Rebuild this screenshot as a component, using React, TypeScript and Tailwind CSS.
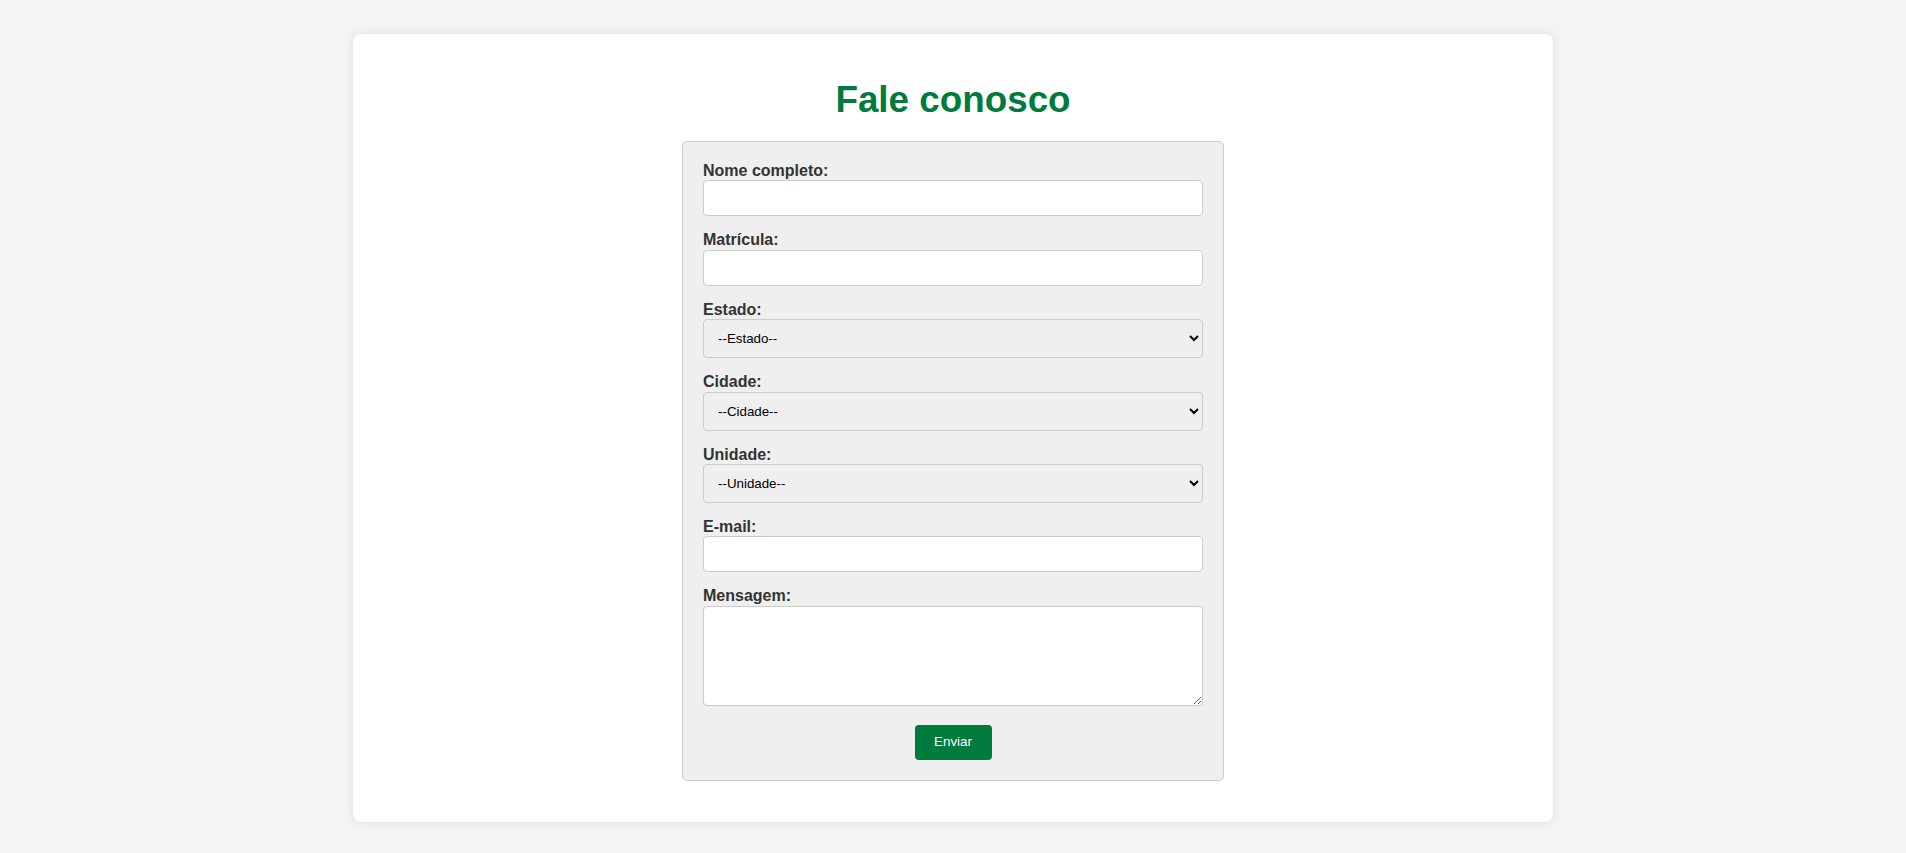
import { useState } from "react";

const fields = [
  { id: "nome", label: "Nome completo:", kind: "input", type: "text" },
  { id: "matricula", label: "Matrícula:", kind: "input", type: "text" },
  { id: "estado", label: "Estado:", kind: "select", placeholder: "--Estado--" },
  { id: "cidade", label: "Cidade:", kind: "select", placeholder: "--Cidade--" },
  { id: "unidade", label: "Unidade:", kind: "select", placeholder: "--Unidade--" },
  { id: "email", label: "E-mail:", kind: "input", type: "email" },
];

export default function App() {
  const [mensagem, setMensagem] = useState("");

  return (
    <div className="min-h-screen bg-[#f4f4f4] pt-[34px] pb-8 font-['Liberation_Sans',Arial,sans-serif]">
      <div className="mx-auto w-[1200px] rounded-lg bg-white pt-[45px] pb-[41px] shadow-[0_0_10px_rgba(0,0,0,0.1)]">
        <h1 className="text-center text-[36.8px] leading-[42px] font-bold text-[#007a3d]">
          Fale conosco
        </h1>

        <form
          className="mx-auto mt-[20px] w-[542px] rounded-[5px] border border-[#cccccc] bg-[#efefef] p-[20px]"
          onSubmit={(e) => e.preventDefault()}
        >
          {fields.map((f) => (
            <div key={f.id} className="mb-[15px]">
              <label htmlFor={f.id} className="block text-[16px] leading-[18.4px] font-bold text-[#333333]">
                {f.label}
              </label>
              {f.kind === "input" ? (
                <input
                  id={f.id}
                  type={f.type}
                  className="block h-[36px] w-full rounded-[4px] border border-[#cccccc] bg-white px-[8px] text-[13.33px] outline-none"
                />
              ) : (
                <select
                  id={f.id}
                  defaultValue=""
                  className="block h-[39px] w-full rounded-[4px] border border-[#cccccc] bg-[#efefef] px-[10px] text-[13.33px] text-black"
                >
                  <option value="">{f.placeholder}</option>
                </select>
              )}
            </div>
          ))}

          <div>
            <label htmlFor="mensagem" className="block text-[16px] leading-[18.4px] font-bold text-[#333333]">
              Mensagem:
            </label>
            <textarea
              id="mensagem"
              value={mensagem}
              onChange={(e) => setMensagem(e.target.value)}
              className="block h-[100px] w-full rounded-[4px] border border-[#cccccc] bg-white p-[8px] text-[13.33px] outline-none"
            />
          </div>

          <div className="mt-[19px] flex justify-center">
            <button
              type="submit"
              className="h-[35px] w-[77px] rounded-[4px] bg-[#007a3d] text-[13.33px] text-white"
            >
              Enviar
            </button>
          </div>
        </form>
      </div>
    </div>
  );
}
